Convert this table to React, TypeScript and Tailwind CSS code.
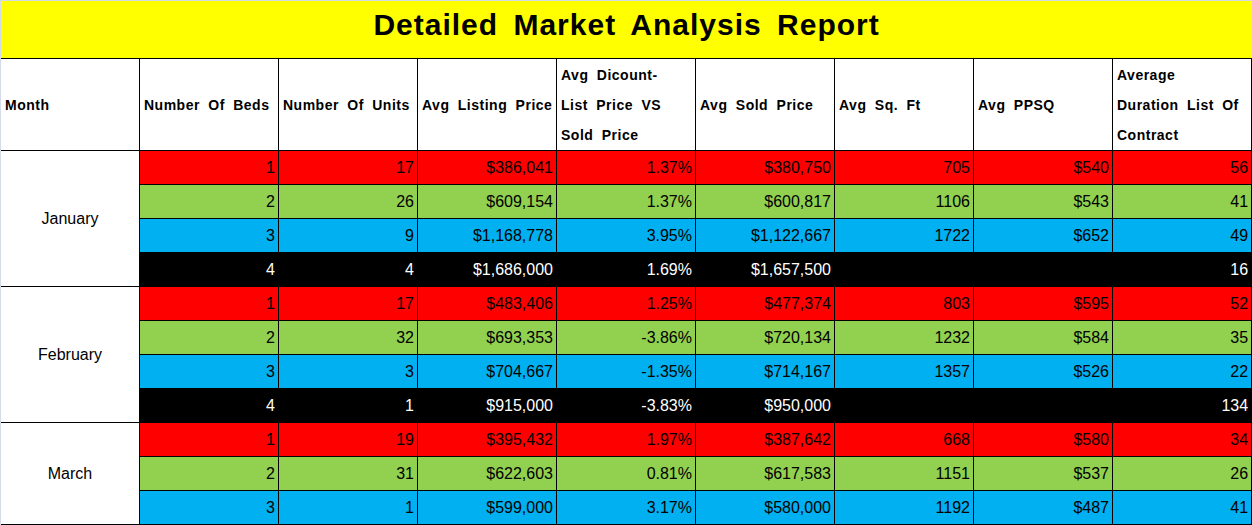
import React from 'react';

type Row = {
  beds: number;
  units: number;
  listing: string;
  discount: string;
  sold: string;
  sqft: string;
  ppsq: string;
  duration: number;
};

type MonthGroup = {
  month: string;
  rows: Row[];
};

const data: MonthGroup[] = [
  {
    month: 'January',
    rows: [
      { beds: 1, units: 17, listing: '$386,041', discount: '1.37%', sold: '$380,750', sqft: '705', ppsq: '$540', duration: 56 },
      { beds: 2, units: 26, listing: '$609,154', discount: '1.37%', sold: '$600,817', sqft: '1106', ppsq: '$543', duration: 41 },
      { beds: 3, units: 9, listing: '$1,168,778', discount: '3.95%', sold: '$1,122,667', sqft: '1722', ppsq: '$652', duration: 49 },
      { beds: 4, units: 4, listing: '$1,686,000', discount: '1.69%', sold: '$1,657,500', sqft: '', ppsq: '', duration: 16 },
    ],
  },
  {
    month: 'February',
    rows: [
      { beds: 1, units: 17, listing: '$483,406', discount: '1.25%', sold: '$477,374', sqft: '803', ppsq: '$595', duration: 52 },
      { beds: 2, units: 32, listing: '$693,353', discount: '-3.86%', sold: '$720,134', sqft: '1232', ppsq: '$584', duration: 35 },
      { beds: 3, units: 3, listing: '$704,667', discount: '-1.35%', sold: '$714,167', sqft: '1357', ppsq: '$526', duration: 22 },
      { beds: 4, units: 1, listing: '$915,000', discount: '-3.83%', sold: '$950,000', sqft: '', ppsq: '', duration: 134 },
    ],
  },
  {
    month: 'March',
    rows: [
      { beds: 1, units: 19, listing: '$395,432', discount: '1.97%', sold: '$387,642', sqft: '668', ppsq: '$580', duration: 34 },
      { beds: 2, units: 31, listing: '$622,603', discount: '0.81%', sold: '$617,583', sqft: '1151', ppsq: '$537', duration: 26 },
      { beds: 3, units: 1, listing: '$599,000', discount: '3.17%', sold: '$580,000', sqft: '1192', ppsq: '$487', duration: 41 },
    ],
  },
];

// row colour by bed count
const bedStyles: Record<number, string> = {
  1: 'bg-[#ff0000] text-black',
  2: 'bg-[#92d050] text-black',
  3: 'bg-[#00b0f0] text-black',
  4: 'bg-black text-white',
};

const headerCell =
  'border-r border-b border-black bg-white pl-1 pr-0 text-left align-middle whitespace-nowrap font-bold text-[14px] leading-[30px] tracking-[0.5px] [word-spacing:4px] text-black';

const dataCell = 'border-r border-b border-black pr-[3px] text-right align-middle text-[16px] leading-none';

const App: React.FC = () => {
  return (
    <div className="w-[1252px] h-[525px] overflow-hidden pl-[1px] pt-[1px] [font-family:'Liberation_Sans',Arial,sans-serif] bg-[#d4dbe6]">
      <table className="w-[1251px] table-fixed border-separate border-spacing-0 bg-white">
        <colgroup>
          {Array.from({ length: 9 }).map((_, i) => (
            <col key={i} className="w-[139px]" />
          ))}
        </colgroup>
        <tbody>
          <tr className="h-[58px]">
            <td
              colSpan={9}
              className="border-b border-black bg-[#ffff00] pb-[9px] text-center align-middle text-[30px] leading-none font-bold tracking-[1px] [word-spacing:6px] text-black"
            >
              Detailed Market Analysis Report
            </td>
          </tr>
          <tr className="h-[92px]">
            <td className={headerCell}>Month</td>
            <td className={headerCell}>Number Of Beds</td>
            <td className={headerCell}>Number Of Units</td>
            <td className={headerCell}>Avg Listing Price</td>
            <td className={headerCell}>
              Avg Dicount-
              <br />
              List Price VS
              <br />
              Sold Price
            </td>
            <td className={headerCell}>Avg Sold Price</td>
            <td className={headerCell}>Avg Sq. Ft</td>
            <td className={headerCell}>Avg PPSQ</td>
            <td className={headerCell}>
              Average
              <br />
              Duration List Of
              <br />
              Contract
            </td>
          </tr>
          {data.map((group) =>
            group.rows.map((row, idx) => (
              <tr key={`${group.month}-${row.beds}`} className="h-[34px]">
                {idx === 0 && (
                  <td
                    rowSpan={group.rows.length}
                    className="border-r border-b border-black bg-white text-center align-middle text-[16px] text-black"
                  >
                    {group.month}
                  </td>
                )}
                <td className={`${dataCell} ${bedStyles[row.beds]}`}>{row.beds}</td>
                <td className={`${dataCell} ${bedStyles[row.beds]}`}>{row.units}</td>
                <td className={`${dataCell} ${bedStyles[row.beds]}`}>{row.listing}</td>
                <td className={`${dataCell} ${bedStyles[row.beds]}`}>{row.discount}</td>
                <td className={`${dataCell} ${bedStyles[row.beds]}`}>{row.sold}</td>
                <td className={`${dataCell} ${bedStyles[row.beds]}`}>{row.sqft}</td>
                <td className={`${dataCell} ${bedStyles[row.beds]}`}>{row.ppsq}</td>
                <td className={`${dataCell} ${bedStyles[row.beds]}`}>{row.duration}</td>
              </tr>
            ))
          )}
        </tbody>
      </table>
    </div>
  );
};

export default App;
